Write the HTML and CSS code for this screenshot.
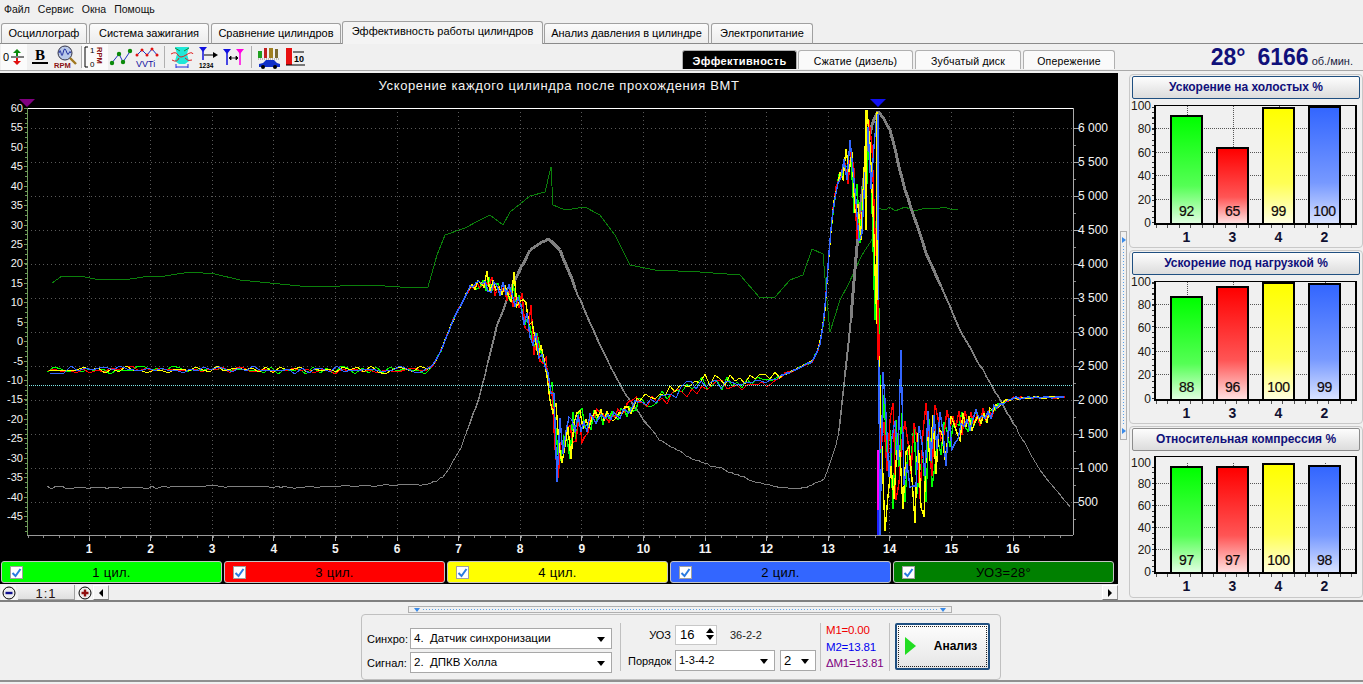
FILE: index.html
```html
<!DOCTYPE html>
<html lang="ru">
<head>
<meta charset="utf-8">
<title>Эффективность работы цилиндров</title>
<link rel="stylesheet" href="styles.css">
<script src="chart.js" defer></script>
</head>
<body>
<nav class="menu"><span>Файл</span><span>Сервис</span><span>Окна</span><span>Помощь</span></nav>

<div class="tabs">
  <div class="tab w1">Осциллограф</div>
  <div class="tab w2">Система зажигания</div>
  <div class="tab w3">Сравнение цилиндров</div>
  <div class="tab active w4">Эффективность работы цилиндров</div>
  <div class="tab w5">Анализ давления в цилиндре</div>
  <div class="tab w6">Электропитание</div>
</div>

<div class="toolbar">
  <div class="tool pressed"><svg width="24" height="24" viewBox="0 0 24 24"><text x="1" y="16" class="ic-t" fill="#000">0</text><path d="M9 12h13" stroke="#000"/><path d="M15 4l4 4h-3v3h-2V8h-3z" fill="#0a8a0a"/><path d="M15 20l4-4h-3v-3h-2v3h-3z" fill="#e01010"/></svg></div>
  <div class="tool"><svg width="24" height="24" viewBox="0 0 24 24"><text x="12" y="15" text-anchor="middle" class="ic-b">B</text><path d="M4 18h16" stroke="#000" stroke-width="2"/></svg></div>
  <div class="tool"><svg width="24" height="24" viewBox="0 0 24 24"><circle cx="11" cy="8" r="7" fill="#b8c8e8" stroke="#334"/><path d="M5 8q1-5 2 0t2 0 2-4 2 4 2 0 2 0" fill="none" stroke="#2030a0"/><path d="M16 13l6 6" stroke="#a07820" stroke-width="2.4"/><text x="0" y="23" class="ic-r">RPM</text></svg></div>
  <i class="sep s1"></i>
  <div class="tool pressed"><svg width="24" height="24" viewBox="0 0 24 24"><path d="M5 2H2v20h3" fill="none" stroke="#000"/><text x="7" y="8" class="ic-s">1</text><text x="7" y="22" class="ic-s">0</text><text transform="translate(14 2) rotate(90)" class="ic-r">RPM</text></svg></div>
  <div class="tool"><svg width="24" height="24" viewBox="0 0 24 24"><path d="M2 19l8-10 4 8 8-12" fill="none" stroke="#2030c0"/><g fill="#0a8a0a"><circle cx="3" cy="18" r="2.2"/><circle cx="10" cy="9" r="2.2"/><circle cx="14" cy="17" r="2.2"/><circle cx="21" cy="6" r="2.2"/></g></svg></div>
  <div class="tool"><svg width="24" height="24" viewBox="0 0 24 24"><path d="M1 11l6-6 5 5 5-6 6 7" fill="none" stroke="#2030c0"/><g fill="#e01010"><circle cx="2" cy="10" r="1.5"/><circle cx="7" cy="5" r="1.5"/><circle cx="12" cy="10" r="1.5"/><circle cx="17" cy="4" r="1.5"/><circle cx="22" cy="10" r="1.5"/></g><text x="1" y="22" class="ic-v">VVTi</text></svg></div>
  <i class="sep s2"></i>
  <div class="tool"><svg width="24" height="24" viewBox="0 0 24 24"><path d="M5 2h14l-2 7 2 7-4 3H9l-4-3 2-7z" fill="#20e8d8"/><path d="M1 9q5-3 7 1t8 0 7-1M2 15q5 3 7-2M15 13q3 4 7 2" fill="none" stroke="#e02020"/><path d="M5 3l5 3M19 3l-5 3" stroke="#1a8a3a"/><path d="M6 22h12M6 19v4M18 19v4" stroke="#2030e0"/></svg></div>
  <div class="tool"><svg width="24" height="24" viewBox="0 0 24 24"><path d="M3 2h8L7 7z" fill="#1010e0"/><path d="M7 6v9" stroke="#1010e0" stroke-width="1.5"/><path d="M8 10h11" stroke="#000"/><path d="M22 10l-5-3v6z" fill="#000"/><text x="3" y="23" class="ic-n">1234</text></svg></div>
  <div class="tool"><svg width="24" height="24" viewBox="0 0 24 24"><path d="M1 4h8L5 9z" fill="#1010e0"/><path d="M5 8v12" stroke="#1010e0" stroke-width="1.5"/><path d="M14 4h8l-4 5z" fill="#ff00e0"/><path d="M18 8v12" stroke="#ff00e0" stroke-width="1.5"/><path d="M7 13h9M7 13l2-2v4zM16 13l-2-2v4z" stroke="#000" fill="#000" stroke-width=".8"/></svg></div>
  <i class="sep s2"></i>
  <div class="tool"><svg width="24" height="24" viewBox="0 0 24 24"><rect x="1" y="6" width="4" height="7" fill="#20a020"/><rect x="7" y="3" width="3" height="10" fill="#c02020"/><rect x="12" y="3" width="4" height="10" fill="#a08020"/><rect x="18" y="4" width="3" height="9" fill="#7a6a30"/><path d="M1 14h22" stroke="#888" stroke-dasharray="1 1"/><path d="M2 22v-3l4-1 3-3h8l3 3 3 1v3z" fill="#1030c8"/><circle cx="6" cy="22" r="2"/><circle cx="18" cy="22" r="2"/></svg></div>
  <div class="tool"><svg width="24" height="24" viewBox="0 0 24 24"><rect x="3" y="3" width="6" height="17" fill="#e81010"/><text x="11" y="17" class="ic-s b">10</text><path d="M10 7h11M3 20h19" stroke="#000"/></svg></div>

  <div class="subtabs">
    <div class="subtab dark st1">Эффективность</div>
    <div class="subtab st2">Сжатие (дизель)</div>
    <div class="subtab st3">Зубчатый диск</div>
    <div class="subtab st4">Опережение</div>
  </div>
  <div class="readout"><b class="deg">28°</b><b class="rpm">6166</b><span>об./мин.</span></div>
</div>

<main class="main">
  <section class="left">
    <div class="scope">
      <div id="plot" class="plot-host"></div>
      <div class="legend">
        <div class="lg green"><span class="cb"><svg width="11" height="11" viewBox="0 0 11 11"><path d="M1.5 6l3 3 5-7" class="tick"/></svg></span>1 цил.</div>
        <div class="lg red"><span class="cb"><svg width="11" height="11" viewBox="0 0 11 11"><path d="M1.5 6l3 3 5-7" class="tick"/></svg></span>3 цил.</div>
        <div class="lg yellow"><span class="cb"><svg width="11" height="11" viewBox="0 0 11 11"><path d="M1.5 6l3 3 5-7" class="tick"/></svg></span>4 цил.</div>
        <div class="lg blue"><span class="cb"><svg width="11" height="11" viewBox="0 0 11 11"><path d="M1.5 6l3 3 5-7" class="tick"/></svg></span>2 цил.</div>
        <div class="lg dgreen"><span class="cb"><svg width="11" height="11" viewBox="0 0 11 11"><path d="M1.5 6l3 3 5-7" class="tick"/></svg></span>УОЗ=28°</div>
      </div>
    </div>
    <div class="scrollrow">
      <div class="zoombtn"><svg width="14" height="14" viewBox="0 0 14 14"><circle cx="7" cy="7" r="6" fill="#eee" stroke="#000"/><path d="M3.5 7h7" stroke="#101090" stroke-width="2.4"/></svg></div>
      <div class="ratio">1:1</div>
      <div class="zoombtn"><svg width="14" height="14" viewBox="0 0 14 14"><circle cx="7" cy="7" r="6" fill="#eee" stroke="#000"/><path d="M3.5 7h7M7 3.5v7" stroke="#901010" stroke-width="2.4"/></svg></div>
      <div class="sb-btn"><i class="tri-l"></i></div>
      <div class="sb-track"></div>
      <div class="sb-btn"><i class="tri-r"></i></div>
    </div>
  </section>

  <div class="vsplit"><i class="tri-sr"></i><i class="dots-v"></i><i class="tri-sr"></i></div>

  <aside class="side">
    <section class="panel h1">
      <h2 class="phead navy">Ускорение на холостых %</h2>
      <div class="barchart">
        <div class="scale">
          <span class="yl v0">0</span><span class="yl v20">20</span><span class="yl v40">40</span><span class="yl v60">60</span><span class="yl v80">80</span><span class="yl v100">100</span>
          <i class="gl v20"></i><i class="gl v40"></i><i class="gl v60"></i><i class="gl v80"></i>
          <div class="bars">
            <div class="slot"><div class="bar c1" style="height:92%"><b>92</b></div><em>1</em></div>
            <div class="slot"><div class="bar c3" style="height:65%"><b>65</b></div><em>3</em></div>
            <div class="slot"><div class="bar c4" style="height:99%"><b>99</b></div><em>4</em></div>
            <div class="slot"><div class="bar c2" style="height:100%"><b>100</b></div><em>2</em></div>
          </div>
        </div>
      </div>
    </section>
    <section class="panel h2p">
      <h2 class="phead navy">Ускорение под нагрузкой %</h2>
      <div class="barchart">
        <div class="scale">
          <span class="yl v0">0</span><span class="yl v20">20</span><span class="yl v40">40</span><span class="yl v60">60</span><span class="yl v80">80</span><span class="yl v100">100</span>
          <i class="gl v20"></i><i class="gl v40"></i><i class="gl v60"></i><i class="gl v80"></i>
          <div class="bars">
            <div class="slot"><div class="bar c1" style="height:88%"><b>88</b></div><em>1</em></div>
            <div class="slot"><div class="bar c3" style="height:96%"><b>96</b></div><em>3</em></div>
            <div class="slot"><div class="bar c4" style="height:100%"><b>100</b></div><em>4</em></div>
            <div class="slot"><div class="bar c2" style="height:99%"><b>99</b></div><em>2</em></div>
          </div>
        </div>
      </div>
    </section>
    <section class="panel h3">
      <h2 class="phead">Относительная компрессия %</h2>
      <div class="barchart">
        <div class="scale low">
          <span class="yl v0">0</span><span class="yl v20">20</span><span class="yl v40">40</span><span class="yl v60">60</span><span class="yl v80">80</span><span class="yl v100">100</span>
          <i class="gl v20"></i><i class="gl v40"></i><i class="gl v60"></i><i class="gl v80"></i>
          <div class="bars">
            <div class="slot"><div class="bar c1" style="height:97%"><b>97</b></div><em>1</em></div>
            <div class="slot"><div class="bar c3" style="height:97%"><b>97</b></div><em>3</em></div>
            <div class="slot"><div class="bar c4" style="height:100%"><b>100</b></div><em>4</em></div>
            <div class="slot"><div class="bar c2" style="height:98%"><b>98</b></div><em>2</em></div>
          </div>
        </div>
      </div>
    </section>
  </aside>
</main>

<footer class="bottom">
  <div class="hsplit"><i class="tri-sd"></i><i class="dots-h"></i><i class="tri-sd"></i></div>
  <div class="ctrl">
    <div class="col-a">
      <label class="row"><span class="lb">Синхро:</span><span class="sel wa">4.&nbsp; Датчик синхронизации</span></label>
      <label class="row"><span class="lb">Сигнал:</span><span class="sel wa">2.&nbsp; ДПКВ Холла</span></label>
    </div>
    <i class="vr"></i>
    <div class="col-b">
      <div class="row r1">
        <span class="lb2">УОЗ</span>
        <span class="spin">16<span class="spin-btns"><i class="up"></i><i class="dn"></i></span></span>
        <span class="gear">36-2-2</span>
      </div>
      <div class="row r2">
        <span class="lb2">Порядок</span>
        <span class="sel wb">1-3-4-2</span>
        <span class="sel wc">2</span>
      </div>
    </div>
    <i class="vr"></i>
    <div class="marks"><span class="mr">M1=0.00</span><span class="mb">M2=13.81</span><span class="mp">ΔM1=13.81</span></div>
    <i class="vr"></i>
    <button class="analyze" type="button"><i class="play"></i><span>Анализ</span></button>
  </div>
</footer>
</body>
</html>
```
FILE: styles.css
```css
* { box-sizing: border-box; }
html, body { margin: 0; padding: 0; }
body {
  width: 1363px; height: 684px; overflow: hidden;
  background: #f0f0f0; color: #000;
  font: 11px "Liberation Sans", Arial, sans-serif;
}
i { display: block; font-style: normal; }

/* menu */
.menu { height: 21px; display: flex; gap: 8px; padding: 3px 0 0 4px; font-size: 10.5px; color: #111; }

/* main tabs */
.tabs { height: 23px; display: flex; align-items: flex-end; gap: 2px; padding-left: 1px; border-bottom: 1px solid #8a8a8a; }
.tab {
  height: 21px; margin-bottom: -1px; border: 1px solid #a0a0a0; border-bottom-color: #8a8a8a;
  border-radius: 3px 3px 0 0; background: linear-gradient(#fbfbfb, #ececec);
  text-align: center; line-height: 19px; font-size: 11px; white-space: nowrap;
}
.tab.active { height: 23px; background: #f4f4f4; border-bottom: 0; margin: 0 -1px -1px -1px; line-height: 19px; }
.w1 { width: 86px; } .w2 { width: 120px; } .w3 { width: 130px; } .w4 { width: 201px; } .w5 { width: 165px; } .w6 { width: 102px; }

/* toolbar */
.toolbar { height: 27px; display: flex; align-items: center; padding-left: 1px; border-bottom: 1px solid #a8a8a8; }
.tool { width: 26px; height: 26px; display: flex; align-items: center; justify-content: center; }
.tool.pressed { background: #fbfbfb; }
.sep { width: 1px; height: 22px; background: #b0b0b0; }
.s1 { margin: 0 0 0 2px; }
.s2 { margin: 0 4px; }
.ic-t { font: 11px "Liberation Sans", sans-serif; }
.ic-b { font: bold 15px "Liberation Serif", serif; }
.ic-r { font: bold 7.5px "Liberation Sans", sans-serif; fill: #8a1010; }
.ic-s { font: 8px "Liberation Sans", sans-serif; fill: #000; }
.ic-s.b { font-weight: bold; font-size: 9px; }
.ic-v { font: 9px "Liberation Sans", sans-serif; fill: #1010a0; }
.ic-n { font: bold 6.5px "Liberation Sans", sans-serif; fill: #000; }

.subtabs { margin-left: auto; align-self: flex-end; display: flex; gap: 1px; height: 20px; }
.subtab {
  height: 19px; border: 1px solid #b0b0b0; border-bottom: 0; border-radius: 3px 3px 0 0;
  background: #fafafa; text-align: center; line-height: 20px; font-size: 10.5px; letter-spacing: .2px; white-space: nowrap;
}
.subtab.dark { background: #000; color: #fff; font-weight: bold; font-size: 11px; letter-spacing: .4px; }
.st1 { width: 115px; } .st2 { width: 115px; margin-right: 1px; } .st3 { width: 106px; margin-right: 1px; } .st4 { width: 92px; }
.readout { width: 248px; display: flex; align-items: baseline; justify-content: flex-end; padding-right: 10px; color: #10107a; }
.readout b { font-size: 23px; line-height: 26px; }
.deg { margin-right: 12px; }
.rpm { margin-right: 3px; }
.readout span { font-size: 11px; color: #1a1a40; }

/* main area */
.main { height: 529px; margin-top: 2px; display: flex; border-bottom: 2px solid #808080; }
.left { width: 1118px; }
.scope { height: 511px; background: #000; }
.plot-host { height: 488px; }
.plot-host svg { display: block; }
.legend { height: 22px; display: flex; gap: 2px; padding-left: 1px; }
.lg {
  width: 221px; height: 22px; border: 1px solid #c4c4c4; border-radius: 3px; position: relative;
  text-align: center; line-height: 21px; font-size: 13px; letter-spacing: .3px;
}
.green { background: #00ff00; } .red { background: #ff0000; } .yellow { background: #ffff00; } .blue { background: #3366ff; } .dgreen { background: #008000; }
.cb { position: absolute; left: 8px; top: 4px; width: 13px; height: 13px; background: #fff; border: 1px solid #a0a0a0; display: flex; }
.tick { fill: none; stroke: #2a7be0; stroke-width: 2; }

.scrollrow { height: 15px; margin-top: 1px; display: flex; align-items: stretch; padding-left: 1px; }
.zoombtn { width: 15px; display: flex; align-items: center; justify-content: center; background: #f6f6f6; }
.ratio { width: 57px; margin: 0 2px; background: linear-gradient(#f4f4f4, #e0e0e0); text-align: center; font-size: 13px; line-height: 17px; letter-spacing: 1px; border-bottom: 1px solid #a0a0a0; border-right: 1px solid #a0a0a0; color: #201010; }
.sb-btn { width: 16px; margin-left: 1px; background: #f4f4f4; border: 1px solid; border-color: #fff #9a9a9a #7a7a7a #fff; display: flex; align-items: center; justify-content: center; }
.sb-track { flex: 1; background: #efefef; }
.tri-l { border: 4px solid transparent; border-right: 4px solid #000; border-left: 0; }
.tri-r { border: 4px solid transparent; border-left: 4px solid #000; border-right: 0; }

.vsplit { width: 7px; height: 209px; margin: 158px 0 0 2px; border: 1px solid #b0b0b0; display: flex; flex-direction: column; align-items: center; padding: 5px 0; justify-content: space-between; }
.tri-sr { border: 3px solid transparent; border-left: 4px solid #3a8ae8; border-right: 0; }
.dots-v { flex: 1; width: 1px; margin: 3px 0; background: repeating-linear-gradient(#5aa0e8 0 1px, transparent 1px 3px); }

/* side */
.side { width: 234px; margin: 1px 0 0 2px; height: 524px; display: flex; flex-direction: column; gap: 2px; }
.panel { border: 1px solid #c8c8c8; border-radius: 4px; padding: 1px 2px 2px; }
.h1 { height: 174px; } .h2p { height: 175px; } .h3 { height: 172px; }
.phead {
  margin: 0; height: 23px; border: 1px solid #1f4f80; border-radius: 2px;
  background: linear-gradient(#fdfdfd, #dcdcdc); text-align: center; font-size: 12px; line-height: 21px; font-weight: bold; color: #10107a;
}
.h3 .phead { border-color: #8c8c8c; }
.barchart { position: relative; height: 120px; margin: 6px 3px 0 22px; border: 2px solid #000; border-top-width: 1px; }
.barchart::after { content: ""; position: absolute; left: 0; right: 0; top: 100%; height: 3px; margin-top: 2px; background: repeating-linear-gradient(90deg, #555 0 1px, transparent 1px 11.5px); }
.h3 .barchart { height: 118px; margin-top: 5px; }
.scale { position: absolute; left: 0; right: 0; bottom: 0; height: 100%; }
.scale.low { height: 95.5%; }
.scale::before { content: ""; position: absolute; right: 100%; top: 0; bottom: 0; width: 2px; margin-right: 2px; background: repeating-linear-gradient(0deg, #333 0 1px, transparent 1px 5.5px); }
.yl { position: absolute; right: 100%; margin-right: 5px; line-height: 12px; transform: translateY(50%); font-size: 12px; color: #201810; }
.gl { position: absolute; left: 0; right: 0; border-top: 1px dotted #555; }
.v0 { bottom: 0; } .v20 { bottom: 20%; } .v40 { bottom: 40%; } .v60 { bottom: 60%; } .v80 { bottom: 80%; } .v100 { bottom: 100%; }
.bars { position: absolute; inset: 0; display: flex; padding: 0 14px; justify-content: space-between; }
.slot { width: 33px; position: relative; display: flex; align-items: flex-end; justify-content: center; }
.slot::before { content: ""; position: absolute; left: 50%; top: 0; bottom: 0; border-left: 1px dotted #555; }
.bar { width: 33px; border: 2px solid #000; border-bottom: 0; text-align: center; position: relative; }
.bar b { position: absolute; left: 0; right: 0; bottom: 4px; font-weight: normal; font-size: 14px; letter-spacing: -.3px; color: #100808; -webkit-text-stroke: .2px #100808; }
.slot em { position: absolute; left: 0; right: 0; top: calc(100% + 6px); text-align: center; font-style: normal; font-weight: bold; font-size: 14px; color: #101030; }
.c1 { background: linear-gradient(#00ff00, #55ff55 65%, #e0ffe0); }
.c3 { background: linear-gradient(#ff0000, #ff5555 65%, #ffe0e0); }
.c4 { background: linear-gradient(#ffff00, #ffff55 65%, #ffffe0); }
.c2 { background: linear-gradient(#3366ff, #7799ff 65%, #d8e2ff); }

/* bottom */
.bottom { display: flex; flex-direction: column; align-items: center; height: 80px; border-bottom: 2px solid #909090; }
.hsplit { width: 544px; height: 7px; margin: 4px 0 0 -3px; border: 1px solid #b0b0b0; display: flex; align-items: center; padding: 0 5px; }
.tri-sd { border: 3px solid transparent; border-top: 4px solid #3a8ae8; border-bottom: 0; }
.dots-h { flex: 1; height: 1px; margin: 0 3px; background: repeating-linear-gradient(90deg, #5aa0e8 0 1px, transparent 1px 3px); }
.ctrl {
  width: 640px; height: 66px; margin: 1px 0 0 -1px; border: 1px solid #c0c0c0; border-radius: 4px;
  display: flex; align-items: center; padding: 0 5px; font-size: 11px;
}
.row { display: flex; align-items: center; }
.col-a { display: flex; flex-direction: column; gap: 3px; margin-top: 7px; }
.lb { width: 43px; }
.sel { height: 21px; background: #fff; border: 1px solid #a8a8a8; padding-left: 3px; position: relative; line-height: 19px; }
.sel::after { content: ""; position: absolute; right: 6px; top: 8px; border: 4px solid transparent; border-top: 5px solid #000; border-bottom: 0; }
.wa { width: 202px; font-size: 11.5px; }
.wb { width: 100px; margin-right: 5px; }
.wc { width: 36px; font-size: 13px; }
.vr { width: 1px; height: 48px; background: #c0c0c0; }
.col-a + .vr { margin: 0 7px 0 8px; }
.col-b { width: 192px; display: flex; flex-direction: column; gap: 5px; margin-top: 2px; }
.lb2 { width: 43px; margin-right: 4px; text-align: right; }
.r1 .lb2 { width: 24px; margin-left: 19px; }
.spin { width: 42px; height: 20px; background: #fff; border: 1px solid #c8c8c8; padding-left: 4px; font-size: 13px; line-height: 18px; position: relative; }
.spin-btns { position: absolute; right: 2px; top: 2px; display: flex; flex-direction: column; gap: 2px; }
.up { border: 4px solid transparent; border-bottom: 5px solid #000; border-top: 0; }
.dn { border: 4px solid transparent; border-top: 5px solid #000; border-bottom: 0; }
.gear { margin-left: 13px; color: #222; }
.marks { width: 63px; margin-left: 5px; display: flex; flex-direction: column; font-size: 11.5px; line-height: 16.5px; letter-spacing: -.2px; white-space: nowrap; }
.marks + .vr { margin-right: 5px; }
.mr { color: #f00000; } .mb { color: #0000f0; } .mp { color: #800080; }
.analyze {
  width: 95px; height: 47px; margin-top: -2px; padding: 0 0 0 26px; border: 2px solid #1f4f80; border-radius: 2px;
  background: linear-gradient(#fdfdfd, #e6e6e6); outline: 1px dotted #222; outline-offset: -4px; position: relative;
  font: bold 12px "Liberation Sans", sans-serif; color: #000; text-align: center;
}
.play { position: absolute; left: 8px; top: 12px; border: 9px solid transparent; border-left: 11px solid #22dd22; border-right: 0; height: 0; }
```
FILE: chart.js
```js
(function () {
  var NS = "http://www.w3.org/2000/svg";
  var host = document.getElementById("plot");
  var seed = 12345;
  function rnd() { seed = (seed * 16807) % 2147483647; return seed / 2147483647; }

  var svg = document.createElementNS(NS, "svg");
  svg.setAttribute("width", 1118);
  svg.setAttribute("height", 488);
  svg.setAttribute("viewBox", "0 73 1118 488");
  host.appendChild(svg);

  function el(name, attrs, parent) {
    var e = document.createElementNS(NS, name);
    for (var k in attrs) e.setAttribute(k, attrs[k]);
    (parent || svg).appendChild(e);
    return e;
  }
  function line(x1, y1, x2, y2, color, extra) {
    var a = { x1: x1, y1: y1, x2: x2, y2: y2, stroke: color, "shape-rendering": "crispEdges" };
    for (var k in extra || {}) a[k] = extra[k];
    return el("line", a);
  }
  function text(x, y, str, size, anchor, extra) {
    var a = { x: x, y: y, fill: "#f4f4f4", "font-size": size, "text-anchor": anchor || "start", "font-family": "Liberation Sans, Arial, sans-serif" };
    for (var k in extra || {}) a[k] = extra[k];
    el("text", a).textContent = str;
  }

  var L = 27, R = 1073, T = 108, B = 535;
  var i, x, y;

  text(559, 90, "Ускорение каждого цилиндра после прохождения ВМТ", 13, "middle", { "letter-spacing": ".62" });

  /* grid */
  for (i = 0; i < 12; i++) {
    y = 128 + 34 * i;
    line(L, y + 0.5, R, y + 0.5, "#5a5a5a", { "stroke-dasharray": "1 3" });
    line(R, y + 0.5, R + 6, y + 0.5, "#aaa");
    line(R, y + 17.5, R + 3, y + 17.5, "#888");
    text(1078, y + 4, i < 11 ? (6 - i * 0.5 | 0) + " " + (i % 2 ? "500" : "000") : "500", 12);
  }
  for (i = 0; i < 16; i++) {
    x = 89 + 61.6 * i;
    line(x, T, x, B, "#5a5a5a", { "stroke-dasharray": "1 3" });
    line(x, B, x, B + 6, "#aaa");
    text(x, 553, String(i + 1), 12, "middle", { "font-weight": "bold" });
  }
  for (x = 27.5; x < R; x += 15.4) line(x + 0.7, B, x + 0.7, B + 3, "#888");

  /* left axis */
  for (i = 0; i <= 21; i++) {
    y = Math.round(108 + i * 19.43);
    line(L - 3, y + 0.5, L, y + 0.5, "#6f9a5a");
    text(23, y + 4, String(60 - i * 5), 11, "end");
  }
  for (y = 108; y < B; y += 4.86) line(L - 2, Math.round(y) + 0.5, L, Math.round(y) + 0.5, "#6f9a5a");

  function interp(keys, px) {
    for (var j = 1; j < keys.length; j++) {
      if (px <= keys[j][0]) {
        var a = keys[j - 1], b = keys[j];
        return a[1] + (b[1] - a[1]) * (px - a[0]) / (b[0] - a[0]);
      }
    }
    return keys[keys.length - 1][1];
  }

  var clip = el("clipPath", { id: "pc" });
  el("rect", { x: L, y: T, width: R - L, height: B - T }, clip);
  var g = el("g", { "clip-path": "url(#pc)" });
  function poly(pts, color, w) {
    el("polyline", { points: pts.map(function (p) { return p[0] + "," + p[1]; }).join(" "), fill: "none", stroke: color, "stroke-width": w, "shape-rendering": "crispEdges" }, g);
  }

  /* dark green advance trace */
  poly([[52,283],[62,276],[80,276],[95,279],[130,279],[150,276],[165,276],[190,272],[215,274],[240,280],[270,283],[300,286],[340,286],[370,285],[400,287],[428,287],[437,255],[445,235],[465,228],[480,220],[490,215],[503,225],[510,212],[530,196],[545,192],[551,167],[553,205],[565,210],[585,207],[600,215],[615,235],[630,265],[655,270],[700,272],[740,275],[760,298],[775,297],[790,280],[803,275],[812,249],[823,254],[826,290],[830,332],[840,300],[848,285],[862,255],[875,235],[877,208],[885,210],[890,207],[895,211],[905,207],[915,211],[925,208],[935,209],[945,207],[952,210],[958,209]], "#0b800b", 1);

  /* grey rpm trace, thickness grows with rpm */
  var rpmKeys = [[47,487],[100,488],[200,486],[300,487],[430,484],[445,475],[460,450],[480,395],[497,325],[515,280],[530,250],[549,239],[560,250],[580,300],[600,345],[620,385],[640,415],[660,440],[690,458],[720,468],[750,480],[780,488],[805,488],[825,478],[838,440],[850,330],[860,210],[870,130],[878,110],[890,130],[905,190],[925,250],[960,330],[1000,400],[1040,470],[1072,510]];
  var prev = null;
  for (x = 47; x <= 1072; x += 3) {
    y = interp(rpmKeys, x) + (rnd() - 0.5) * 1.8;
    if (prev) {
      var w = y < 290 ? 3 : (y < 360 ? 2 : (y < 430 ? 1.5 : 1));
      el("line", { x1: prev[0], y1: Math.round(prev[1]), x2: x, y2: Math.round(y), stroke: "#808080", "stroke-width": w, "shape-rendering": "crispEdges" }, g);
    }
    prev = [x, y];
  }

  line(L, 385.5, R, 385.5, "#7fe8e8", { "stroke-dasharray": "1 1" });

  /* cylinder traces */
  var base = [[47,370],[425,370],[432,367],[440,353],[453,320],[470,287],[487,283],[503,290],[520,303],[533,333],[547,367],[553,403],[558,447],[567,433],[580,430],[593,417],[613,418],[637,403],[660,397],[700,385],[770,380],[790,372],[812,362],[820,345],[825,310],[830,240],[835,195],[842,170],[850,163],[855,200],[860,225],[867,160],[877,190],[878,240],[879,350],[881,440],[890,465],[915,465],[935,450],[950,437],[965,422],[985,416],[1000,405],[1012,398],[1065,397]];
  var amps = [[47,4],[425,4],[432,.6],[470,1],[478,5],[490,8],[505,12],[520,16],[550,16],[556,32],[575,28],[590,12],[605,6],[650,7],[700,8],[760,5],[790,1],[815,1],[825,3],[840,6],[850,28],[860,36],[878,55],[881,60],[890,55],[915,60],[935,42],[950,24],[965,12],[985,9],[1000,2],[1012,1],[1065,.6]];
  var spikes = {
    "#00ff00": { 883: 395, 876: 320, 851: 157 },
    "#ff0000": { 870: 120, 893: 403, 925: 403, 935: 405, 530: 305, 533: 355 },
    "#ffff00": { 866: 110, 876: 118, 914: 523, 885: 531, 877: 300, 878: 360, 487: 271, 515: 272 },
    "#3366ff": { 878: 112, 880: 310, 884: 372, 900: 350, 557: 482, 899: 460, 881: 535 }
  };
  function stepAt(px) {
    if (px < 426) return 7;
    if (px >= 640 && px < 780) return 5;
    if (px >= 1000) return 4;
    return 3;
  }
  var colors = ["#00ff00", "#ff0000", "#ffff00", "#3366ff"];
  colors.forEach(function (c, ci) {
    var thin = [], thick = [], sign = 1, px = 47 + ci;
    while (px <= 1065) {
      var a = interp(amps, px);
      var n = Math.pow(rnd(), 1.2) * a * sign;
      sign = rnd() < 0.78 ? -sign : sign;
      var py = interp(base, px) + n;
      if (px > 880 && px < 930 && c === "#ffff00") py += 14;
      if (px > 880 && px < 960 && c === "#ff0000") py -= 12;
      if (px >= 640 && px < 780 && c === "#ffff00") py -= 3;
      if (px >= 640 && px < 780 && c === "#ff0000") py += 3;
      for (var sx in spikes[c]) { if (Math.abs(sx - px) < 2) py = spikes[c][sx]; }
      py = Math.round(py);
      var isThin = px < 430 || (px >= 640 && px < 780);
      (isThin ? thin : thick).push([px, py]);
      px += stepAt(px);
    }
    /* thin and thick regions are drawn as separate runs joined at their seams */
    var runs = [[], [], [], []];
    thin.forEach(function (p) { (p[0] < 430 ? runs[0] : runs[2]).push(p); });
    thick.forEach(function (p) { (p[0] < 640 ? runs[1] : runs[3]).push(p); });
    runs[1].unshift(runs[0][runs[0].length - 1]);
    runs[2].unshift(runs[1][runs[1].length - 1]);
    runs[3].unshift(runs[2][runs[2].length - 1]);
    poly(runs[0], c, 1);
    poly(runs[1], c, 1.4);
    poly(runs[2], c, 1);
    poly(runs[3], c, 1.4);
  });
  poly([[866,110],[866,230]], "#ffff00", 1.6);
  poly([[877,112],[877,300]], "#ffff00", 1.6);
  poly([[878,114],[878,240]], "#3366ff", 2);
  poly([[878,300],[878,360]], "#ff0000", 2);
  poly([[878,450],[878,510]], "#ff00ff", 2);
  poly([[878,510],[878,535]], "#2020ff", 2);

  /* frame and markers */
  line(L, T + 0.5, R, T + 0.5, "#fff");
  line(L + 0.5, T, L + 0.5, B, "#6f9a5a");
  line(R + 0.5, T, R + 0.5, B, "#aaa");
  line(L, B + 0.5, R, B + 0.5, "#999");
  el("polygon", { points: "19,99 35,99 27,107", fill: "#800080" });
  el("polygon", { points: "870,99 886,99 878,107", fill: "#1010f0" });
})();
```
